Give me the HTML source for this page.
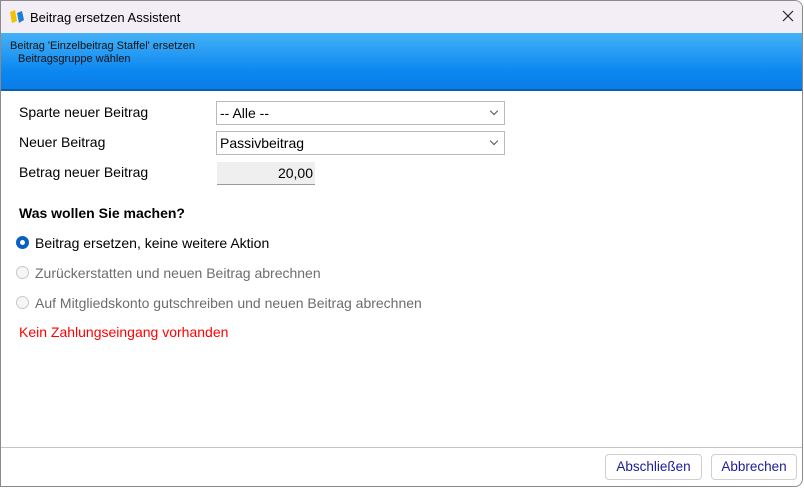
<!DOCTYPE html>
<html><head><meta charset="utf-8"><style>
*{margin:0;padding:0;box-sizing:border-box}
body{width:804px;height:488px;background:#fff;font-family:"Liberation Sans",sans-serif;font-size:14px;color:#000;position:relative;overflow:hidden}
.win{position:absolute;left:0;top:0;width:803px;height:487px;border:1px solid #8a8a8a;border-radius:0 8px 8px 0;background:#fff;overflow:hidden}
.title{position:absolute;left:0;top:0;width:100%;height:32px;background:#f3eef6}
.title .t{position:absolute;left:29px;top:9px;font-size:13px}
.banner{position:absolute;left:0;top:32px;width:100%;height:58px;background:linear-gradient(#45b2f7,#0a86f0 70%,#0a7de8);border-bottom:2px solid #0a5fb0}
.banner div{position:absolute;font-size:11px;color:#111}
.lbl{position:absolute;left:18px}
.sel{position:absolute;left:215px;width:289px;height:24px;border:1px solid #b9b9b9;background:#fff;padding:3px 3px}
.sel:after{content:"";position:absolute;right:7px;top:6px;width:5px;height:5px;border-right:1px solid #555;border-bottom:1px solid #555;transform:rotate(45deg)}
.num{position:absolute;left:216px;top:161px;width:98px;height:23px;background:#efefef;border-bottom:1px solid #9a9a9a;text-align:right;padding:3px 2px 0 0}
.r{position:absolute;left:15px;width:13px;height:13px;border-radius:50%;border:1px solid #c8c8c8;background:#f6f6f6}
.r.on{border:4px solid #0a60c0;background:#fff}
.rt{position:absolute;left:34px;color:#6d6d6d}
.foot{position:absolute;left:0;top:446px;width:100%;border-top:1px solid #c4c4c4}
.btn{position:absolute;top:453px;height:26px;border:1px solid #cfcfcf;border-radius:4px;background:#fff;color:#1a1a9c;font-size:13.5px;text-align:center;line-height:24px}
</style></head><body><div class="win">
<div class="title">
<svg style="position:absolute;left:7px;top:8px" width="18" height="16"><path d="M2 3 L7 1 L9 12 L4 14Z" fill="#f2c200"/><path d="M9 4 L14 2 L16 11 L11 14Z" fill="#1b7fd6"/></svg>
<span class="t">Beitrag ersetzen Assistent</span>
<svg style="position:absolute;left:781px;top:9px" width="12" height="12"><path d="M1 1L11 11M11 1L1 11" stroke="#222" stroke-width="1.2"/></svg></div>
<div class="banner"><div style="left:9px;top:7px">Beitrag 'Einzelbeitrag Staffel' ersetzen</div><div style="left:17px;top:20px">Beitragsgruppe wählen</div></div>
<div class="lbl" style="top:103px">Sparte neuer Beitrag</div>
<div class="sel" style="top:100px">-- Alle --</div>
<div class="lbl" style="top:133px">Neuer Beitrag</div>
<div class="sel" style="top:130px">Passivbeitrag</div>
<div class="lbl" style="top:163px">Betrag neuer Beitrag</div>
<div class="num">20,00</div>
<div class="lbl" style="top:204px;font-weight:bold">Was wollen Sie machen?</div>
<div class="r on" style="top:235px"></div><div class="rt" style="top:234px;color:#000">Beitrag ersetzen, keine weitere Aktion</div>
<div class="r" style="top:265px"></div><div class="rt" style="top:264px">Zurückerstatten und neuen Beitrag abrechnen</div>
<div class="r" style="top:295px"></div><div class="rt" style="top:294px">Auf Mitgliedskonto gutschreiben und neuen Beitrag abrechnen</div>
<div class="lbl" style="top:323px;color:#f00">Kein Zahlungseingang vorhanden</div>
<div class="foot"></div>
<div class="btn" style="left:604px;width:97px">Abschließen</div>
<div class="btn" style="left:710px;width:86px">Abbrechen</div>
</div></body></html>
